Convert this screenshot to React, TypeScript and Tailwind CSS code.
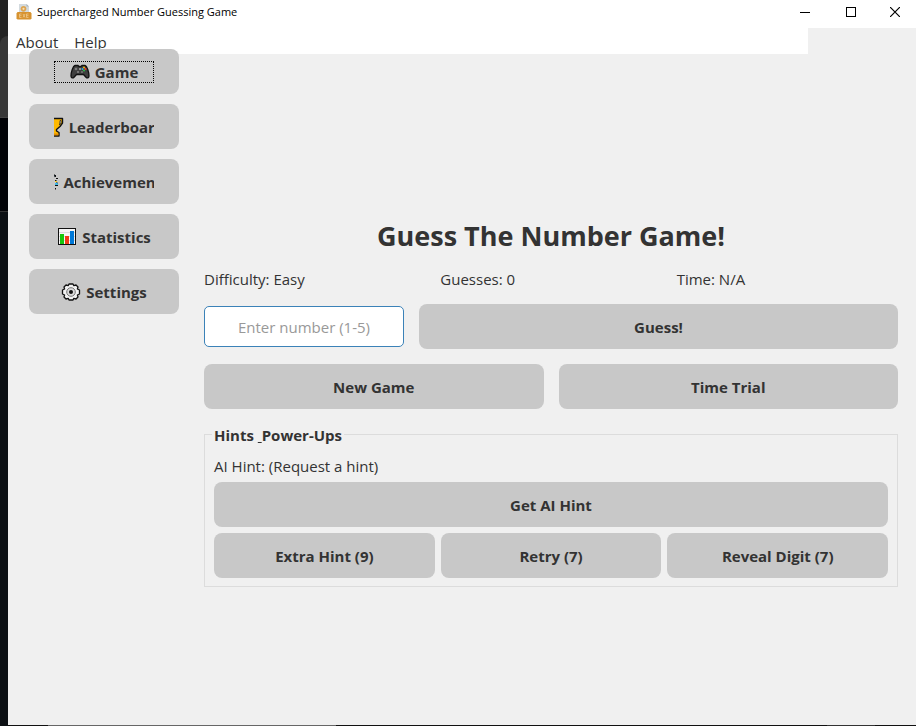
import type { ReactNode } from "react";

const FONT = "font-['Open_Sans','Noto_Sans',sans-serif]";

function ExeIcon() {
  return (
    <svg width="16" height="16" viewBox="0 0 16 16" aria-hidden="true">
      <path d="M3 0h7.500L13 2.500V9H3z" fill="#d3dade" />
      <path d="M10.500 0L13 2.500h-2.500z" fill="#a9b3ba" />
      <circle cx="7.500" cy="4.800" r="2" fill="#f3dfba" stroke="#dda450" strokeWidth="1.800" />
      <path d="M1.500 8h13l1 1.500v5l-1 1h-13l-1-1v-5z" fill="#d79330" />
      <path d="M5.500 10H3.500v3.500h2M3.500 11.700h2M7 10l2 3.500M9 10l-2 3.500M12.500 10h-2v3.500h2M10.500 11.700h2" fill="none" stroke="#f0cf97" strokeWidth="0.700" />
    </svg>
  );
}

function GamepadIcon() {
  return (
    <svg width="20" height="16" viewBox="0 0 20 16" className="shrink-0" aria-hidden="true">
      <path d="M5 1.500h3l.8 1h2.400l.8-1h3c2 .5 4 6.500 4 10.500 0 2-1.800 2.500-3 1.200L13.500 10.500h-7L4 13.200C2.800 14.500 1 14 1 12 1 8 3 2 5 1.500z" fill="#3f3f3f" stroke="#111" strokeWidth="1.300" />
      <circle cx="6" cy="5" r="1.300" fill="#7a7a7a" />
      <path d="M7 8h2M8 7v2" stroke="#888" />
      <circle cx="12" cy="8" r="1" fill="#777" />
      <path d="M9 5h2" stroke="#ddd" />
      <circle cx="14" cy="3.500" r="1" fill="#f5b400" />
      <circle cx="12.500" cy="5" r="1" fill="#27a3e8" />
      <circle cx="15.500" cy="5" r="1.100" fill="#ee3b2b" />
      <circle cx="14" cy="6.500" r="1" fill="#2ebd49" />
    </svg>
  );
}

function TrophyIcon() {
  return (
    <svg width="20" height="20" viewBox="0 0 20 20" className="shrink-0" aria-hidden="true">
      <path d="M2 1.500h16.500v4.500L16 9.500l-3.500 3v1.500l2.500 1.500v3.500H5.500v-3.500L8 14v-1.500l-3.500-3L2 6z" fill="#ffb900" stroke="#111" strokeWidth="1.400" strokeLinejoin="round" />
      <path d="M16 3.500h1v2L15.500 8zM4.500 3.500h-1v2L5 8z" fill="#c8c8c8" stroke="#111" strokeWidth="0.600" />
      <path d="M6 16.500h8.500v1.800H6z" fill="#e08a00" />
    </svg>
  );
}

function MedalIcon() {
  return (
    <svg width="20" height="20" viewBox="0 0 20 20" className="shrink-0" aria-hidden="true">
      <path d="M3 3h5l2 4 2-4h5l-4 7H7z" fill="#1b8fe0" stroke="#111" />
      <circle cx="10" cy="12" r="5" fill="#ffb900" stroke="#111" />
      <path d="M17.500 3v2M18 6.500h2M17 8.500h1.500M18.500 10.500l1.500 1M17 13.500h3M17.500 16v1.500" stroke="#111" />
      <path d="M17 9.500h2" stroke="#ffd21c" />
      <path d="M17 12h3" stroke="#15b4f0" strokeWidth="1.500" />
    </svg>
  );
}

function ChartIcon() {
  return (
    <svg width="20" height="18" viewBox="0 0 20 18" className="shrink-0" aria-hidden="true">
      <rect x="1.500" y="0.500" width="17" height="16" fill="#f6f6f6" stroke="#111" />
      <path d="M2 4.500h16M2 8.500h16M2 12.500h16" stroke="#dcdcdc" />
      <rect x="3" y="6" width="4" height="10" fill="#16c60c" />
      <rect x="8" y="8" width="4" height="8" fill="#f03a17" />
      <rect x="13" y="3" width="4" height="13" fill="#0078d7" />
    </svg>
  );
}

function GearIcon() {
  return (
    <svg width="20" height="18" viewBox="0 0 20 18" className="shrink-0" aria-hidden="true">
      <path d="M8 1h4l.7 1.600L15 2l2 2-.6 2L18.500 7v4l-2.100 1 .6 2-2 2-2.300-.6L12 17H8l-.7-1.600L5 16l-2-2 .6-2L1.500 11V7l2.100-1L3 4l2-2 2.300.6z" fill="#f2f2f2" stroke="#111" strokeWidth="1.300" strokeLinejoin="round" />
      <circle cx="10" cy="9" r="4.300" fill="#dcdcdc" stroke="#777" />
      <circle cx="10" cy="9" r="2" fill="#111" />
    </svg>
  );
}

const NAV: { label: string; icon: ReactNode; focused?: boolean }[] = [
  { label: "Game", icon: <GamepadIcon />, focused: true },
  { label: "Leaderboard", icon: <TrophyIcon /> },
  { label: "Achievements", icon: <MedalIcon /> },
  { label: "Statistics", icon: <ChartIcon /> },
  { label: "Settings", icon: <GearIcon /> },
];

function Button({ children }: { children: ReactNode }) {
  return (
    <button type="button" className="h-[45px] min-w-0 flex-1 rounded-lg bg-[#c8c8c8] text-[15px] font-bold text-[#333]">
      {children}
    </button>
  );
}

function TitleBar() {
  return (
    <header className="flex h-7 items-center bg-white pb-1 pl-2 text-black">
      <ExeIcon />
      <h1 className="ml-[5px] flex-1 text-[11px] leading-4">Supercharged Number Guessing Game</h1>
      <button type="button" aria-label="Minimize" className="flex h-6 w-[46px] items-center justify-center">
        <svg width="10" height="10" viewBox="0 0 10 10"><rect y="5" width="10" height="1" /></svg>
      </button>
      <button type="button" aria-label="Maximize" className="flex h-6 w-[46px] items-center justify-center">
        <svg width="10" height="10" viewBox="0 0 10 10"><rect x=".5" y=".5" width="9" height="9" fill="none" stroke="#000" /></svg>
      </button>
      <button type="button" aria-label="Close" className="flex h-6 w-[42px] items-center justify-center">
        <svg width="10" height="10" viewBox="0 0 10 10"><path d="M0 0l10 10M10 0L0 10" stroke="#000" strokeWidth="1.200" /></svg>
      </button>
    </header>
  );
}

export default function App() {
  return (
    <div className={`flex min-h-screen bg-[#f0f0f0] text-[15px] leading-5 text-[#333] ${FONT}`}>
      <div className="flex w-2 shrink-0 flex-col bg-[#0c1014]" aria-hidden="true">
        <div className="bg-[#232323]">
          <div className="mt-9 h-[82px] rounded-tl-lg border-b border-[#444] bg-[#373737]" />
        </div>
        <div className="h-[94px] border-b border-[#333] bg-[#010206]" />
      </div>
      <div className="flex min-w-0 flex-1 flex-col">
        <TitleBar />
        <nav className="flex h-[26px] w-full max-w-[800px] items-end gap-4 bg-white pb-0.5 pl-2">
          <button type="button">About</button>
          <button type="button">Help</button>
        </nav>
        <div className="flex flex-1 gap-[25px] pr-[18px] pl-[21px]">
          <aside className="relative -mt-[5px] flex w-[150px] shrink-0 flex-col gap-2.5">
            {NAV.map((item) => (
              <button
                key={item.label}
                type="button"
                className="flex h-[45px] items-center justify-center rounded-lg bg-[#c8c8c8] font-bold"
              >
                <span
                  className={`flex h-[22px] w-[100px] items-center justify-center gap-[5px] overflow-hidden whitespace-nowrap ${item.focused ? "outline-1 -outline-offset-1 outline-black outline-dotted" : ""}`}
                >
                  {item.icon}
                  {item.label}
                </span>
              </button>
            ))}
          </aside>
          <main className="min-w-0 flex-1 pt-[164px] pb-10">
            <h2 className="text-center text-[27px] leading-9 font-bold">Guess The Number Game!</h2>
            <div className="mt-[15px] grid grid-cols-3 gap-[15px]">
              <p>Difficulty: Easy</p>
              <p>Guesses: 0</p>
              <p>Time: N/A</p>
            </div>
            <div className="mt-[15px] flex items-center gap-[15px]">
              <input
                type="text"
                aria-label="Enter number"
                placeholder="Enter number (1-5)"
                className="h-[41px] w-[200px] rounded-[5px] border border-[#3b82b8] bg-white text-center outline-none placeholder:text-[#999]"
              />
              <Button>Guess!</Button>
            </div>
            <div className="mt-[15px] flex gap-[15px]">
              <Button>New Game</Button>
              <Button>Time Trial</Button>
            </div>
            <fieldset className="mt-3.5 border border-[#dcdcdc] px-[9px] pb-2">
              <legend className="-ml-0.5 px-0.5 pt-0.5 font-bold">
                Hints <u>&nbsp;</u>Power-Ups
              </legend>
              <p className="mt-[11px]">AI Hint: (Request a hint)</p>
              <div className="mt-1.5 flex">
                <Button>Get AI Hint</Button>
              </div>
              <div className="mt-1.5 flex gap-1.5">
                <Button>Extra Hint (9)</Button>
                <Button>Retry (7)</Button>
                <Button>Reveal Digit (7)</Button>
              </div>
            </fieldset>
          </main>
        </div>
        <footer className="flex h-px justify-between bg-[#111] pr-[41px] pl-10" aria-hidden="true">
          <div className="w-72 bg-[#666]" />
          <div className="w-12 bg-[#333]" />
        </footer>
      </div>
    </div>
  );
}
